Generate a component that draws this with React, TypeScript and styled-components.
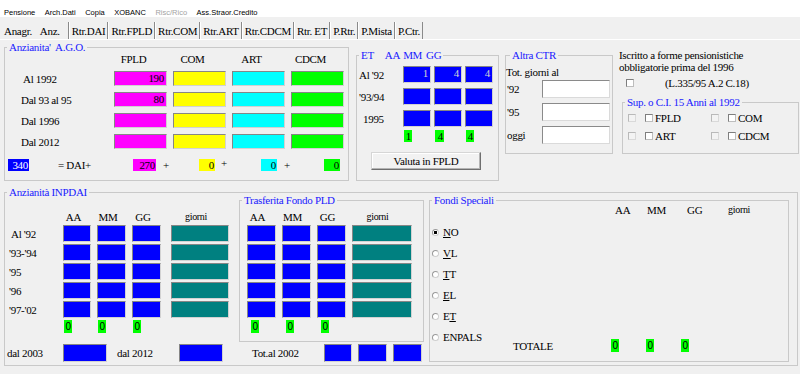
import React from "react";
import styled, { createGlobalStyle } from "styled-components";

const GlobalStyle = createGlobalStyle`
  html, body { margin: 0; padding: 0; background: #f0f0f0; }
  #root { width: 800px; height: 374px; overflow: hidden; }
  *, *::before, *::after { box-sizing: border-box; }
`;

const SERIF = `"Liberation Serif", "Times New Roman", serif`;
const SANS = `"Liberation Sans", Arial, sans-serif`;

const C = {
  face: "#f0f0f0",
  frame: "#c9c9c9",
  caption: "#1a1aff",
  blue: "#0000ff",
  magenta: "#ff00ff",
  yellow: "#ffff00",
  cyan: "#00ffff",
  green: "#00ff00",
  teal: "#008080",
};

const Window = styled.div`
  width: 800px;
  height: 374px;
  background: ${C.face};
  display: flex;
  flex-direction: column;
  font-family: ${SERIF};
  font-size: 11px;
  line-height: 12px;
  letter-spacing: -0.3px;
  color: #000;
`;

/* ---------- menu + tabs ---------- */
const MenuBar = styled.nav`
  height: 17px;
  flex: none;
  background: #fff;
  display: flex;
  align-items: center;
  gap: 9.5px;
  padding: 8px 0 0 4px;
  font-family: ${SANS};
  font-size: 7.5px;
  line-height: 9px;
  letter-spacing: 0;
`;
const MenuItem = styled.span<{ $disabled?: boolean }>`
  color: ${(p) => (p.$disabled ? "#a3a3a3" : "#000")};
  white-space: nowrap;
`;

const TabStrip = styled.div`
  height: 23px;
  flex: none;
  display: flex;
  align-items: flex-end;
  border-bottom: 1px solid #fff;
`;
type TabKind = "plain" | "active" | "normal";
const Tab = styled.div<{ $kind: TabKind }>`
  height: 17px;
  display: flex;
  align-items: center;
  white-space: nowrap;
  padding: ${(p) =>
    p.$kind === "plain" ? "0 3px 0 3px" : p.$kind === "active" ? "0 8px 0 3px" : "0 2px 0 2px"};
  border-left: 1px solid ${(p) => (p.$kind === "normal" ? "#ffffff" : "transparent")};
  border-right: 1px solid ${(p) => (p.$kind === "plain" ? "transparent" : "#8a8a8a")};
`;

/* ---------- generic parts ---------- */
const Panel = styled.main`
  flex: 1;
  display: flex;
  flex-direction: column;
`;
const TopRow = styled.div`
  height: 152px;
  flex: none;
  display: flex;
  align-items: flex-start;
  padding-left: 4px;
`;
const GroupBox = styled.section`
  position: relative;
  flex: none;
  border: 1px solid ${C.frame};
`;
const Caption = styled.span<{ $left?: number }>`
  position: absolute;
  top: -7px;
  left: ${(p) => p.$left ?? 2}px;
  padding: 0 2px;
  display: flex;
  background: ${C.face};
  color: ${C.caption};
  white-space: nowrap;
  line-height: 12px;
`;
const CapPart = styled.span<{ $ml: number }>`
  margin-left: ${(p) => p.$ml}px;
`;
const ColHead = styled.span<{ $pr?: number; $small?: boolean }>`
  text-align: center;
  padding-right: ${(p) => p.$pr ?? 8}px;
  white-space: nowrap;
  font-size: ${(p) => (p.$small ? "10px" : "11px")};
  align-self: center;
`;
const RowLabel = styled.span<{ $indent?: number }>`
  padding-left: ${(p) => p.$indent ?? 0}px;
  white-space: nowrap;
  align-self: center;
`;
const Field = styled.div<{ $bg: string; $fg?: string }>`
  background: ${(p) => p.$bg};
  color: ${(p) => p.$fg ?? "#000"};
  border: 1px solid;
  border-color: #868686 #d2d2d2 #d2d2d2 #868686;
  text-align: right;
  padding-right: 2px;
  line-height: 13px;
  overflow: hidden;
`;
const Chip = styled.span<{ $bg: string; $fg?: string; $w: number }>`
  display: block;
  width: ${(p) => p.$w}px;
  height: 12px;
  background: ${(p) => p.$bg};
  color: ${(p) => p.$fg ?? "#000"};
  text-align: right;
  padding-right: 1px;
  line-height: 12px;
`;
const SansChip = styled(Chip)`
  font-family: ${SANS};
  font-size: 10px;
  letter-spacing: 0;
  height: 13px;
  line-height: 13px;
  justify-self: start;
`;
const Plus = styled.span<{ $raised?: boolean }>`
  margin-top: ${(p) => (p.$raised ? "-5px" : "0")};
  padding-left: 1px;
`;
const CheckBox = styled.span<{ $disabled?: boolean }>`
  display: inline-block;
  flex: none;
  width: 8px;
  height: 8px;
  border: 1px solid;
  border-color: ${(p) =>
    p.$disabled ? "#b9b9b9 #d9d9d9 #d9d9d9 #b9b9b9" : "#7e7e7e #bdbdbd #bdbdbd #7e7e7e"};
  background: ${(p) => (p.$disabled ? "#f3f3f3" : "#fff")};
`;

/* ---------- A.G.O. ---------- */
const AgoGroup = styled(GroupBox)`
  width: 345px;
  height: 134px;
  margin-top: 7px;
  padding: 5px 0 0 3px;
`;
const AgoGrid = styled.div`
  display: grid;
  grid-template-columns: 100px repeat(4, 53px);
  grid-template-rows: 12px repeat(4, 15px) 16px;
  column-gap: 6px;
  row-gap: 6px;
`;
const AgoTotals = styled.div`
  grid-column: 1 / -1;
  align-self: end;
  height: 12px;
  display: grid;
  grid-template-columns: 50px 75px 29px 37px 21px 41px 22px 41px 16px;
  align-items: center;
`;

/* ---------- ET ---------- */
const EtGroup = styled(GroupBox)`
  width: 143px;
  height: 126px;
  margin: 15px 0 0 7px;
  padding: 10px 0 0 2px;
`;
const EtGrid = styled.div`
  display: grid;
  grid-template-columns: 41px repeat(3, 28px);
  grid-template-rows: repeat(3, 17px) 12px auto;
  column-gap: 3px;
  row-gap: 5px;
`;
const EtChip = styled(Chip)`
  margin-top: -2px;
  justify-self: start;
  margin-left: 1px;
`;
const Button = styled.button`
  grid-column: 1 / -1;
  justify-self: center;
  margin-top: 3px;
  width: 110px;
  height: 18px;
  padding: 0;
  font-family: ${SERIF};
  font-size: 11px;
  letter-spacing: -0.3px;
  color: #000;
  background: #f2f2f2;
  border: 1px solid;
  border-color: #d6d6d6 #6f6f6f #6f6f6f #d6d6d6;
  box-shadow: inset -1px -1px 0 #b4b4b4, inset 1px 1px 0 #fff;
`;

/* ---------- Altra CTR ---------- */
const CtrGroup = styled(GroupBox)`
  width: 108px;
  height: 99px;
  margin: 15px 0 0 6px;
  padding-top: 10px;
`;
const CtrTitle = styled.div`
  height: 12px;
  white-space: nowrap;
`;
const CtrGrid = styled.div`
  margin-top: 2px;
  display: grid;
  grid-template-columns: 36px 68px;
  grid-auto-rows: 18px;
  row-gap: 5px;
`;
const WhiteInput = styled.div`
  background: #fff;
  border: 1px solid;
  border-color: #8a8a8a #dadada #dadada #8a8a8a;
`;

/* ---------- info column ---------- */
const InfoColumn = styled.div`
  width: 180px;
  margin: 9px 0 0 6px;
  display: flex;
  flex-direction: column;
`;
const InfoText = styled.p`
  margin: 0;
  line-height: 12px;
  white-space: nowrap;
`;
const LawRow = styled.div`
  margin-top: 4px;
  height: 12px;
  display: flex;
  align-items: center;
  padding-left: 7px;
  gap: 31px;
`;
const SupGroup = styled(GroupBox)`
  width: 177px;
  height: 52px;
  margin: 13px 0 0 3px;
  padding: 9px 0 0 5px;
`;
const SupGrid = styled.div`
  display: grid;
  grid-template-columns: 83px auto;
  grid-auto-rows: 12px;
  row-gap: 6px;
`;
const SupItem = styled.div`
  display: flex;
  align-items: center;
  white-space: nowrap;
  & > :nth-child(2) {
    margin-left: 9px;
  }
  & > span:last-child {
    margin-left: 2px;
  }
`;

/* ---------- INPDAI ---------- */
const InpdaiGroup = styled(GroupBox)`
  width: 794px;
  height: 174px;
  margin-left: 4px;
  padding-top: 7px;
  display: flex;
  align-items: flex-start;
`;
const LeftBlock = styled.div`
  width: 419px;
  display: flex;
  flex-direction: column;
`;
const LeftTop = styled.div`
  display: flex;
  align-items: flex-start;
`;
const InpdaiGrid = styled.div`
  width: 234px;
  padding-top: 11px;
  display: grid;
  grid-template-columns: 52px 28px 29px 29px 62px;
  grid-template-rows: 12px repeat(5, 17px) 13px;
  column-gap: 6px;
  row-gap: 2px;
`;
const GiorniField = styled(Field)`
  width: 58px;
  justify-self: end;
`;
const InChip = styled(SansChip)`
  margin-left: 1px;
`;
const TrasfGroup = styled(GroupBox)`
  width: 185px;
  height: 142px;
  padding: 10px 0 0 7px;
`;
const TrasfGrid = styled.div`
  display: grid;
  grid-template-columns: 29px 29px 29px 60px;
  grid-template-rows: 12px repeat(5, 17px) 13px;
  column-gap: 6px;
  row-gap: 2px;
`;
const TrChip = styled(SansChip)`
  margin-left: 4px;
`;
const BottomRow = styled.div`
  margin-top: 2px;
  height: 18px;
  display: flex;
  align-items: center;
`;
const BottomLabel = styled.span<{ $w: number; $pl: number }>`
  width: ${(p) => p.$w}px;
  padding-left: ${(p) => p.$pl}px;
  white-space: nowrap;
`;
const WideBlue = styled(Field)`
  width: 44px;
  height: 18px;
`;
const TotBoxes = styled.div`
  display: flex;
  gap: 6px;
`;
const TotBlue = styled(Field)<{ $w: number }>`
  width: ${(p) => p.$w}px;
  height: 18px;
`;

/* ---------- Fondi Speciali ---------- */
const FondiGroup = styled(GroupBox)`
  width: 360px;
  height: 162px;
  margin-left: 5px;
  padding: 3px 0 0 2px;
`;
const FondiHead = styled.div`
  margin-left: 183px;
  height: 12px;
  display: grid;
  grid-template-columns: 32px 40px 41px auto;
  align-items: center;
`;
const FondiHeadCell = styled.span<{ $small?: boolean }>`
  font-size: ${(p) => (p.$small ? "10px" : "11px")};
  white-space: nowrap;
`;
const RadioList = styled.div`
  margin-top: 10px;
  display: flex;
  flex-direction: column;
  gap: 9px;
`;
const RadioRow = styled.label<{ $w?: number }>`
  display: flex;
  align-items: center;
  gap: 4px;
  height: 12px;
  width: ${(p) => (p.$w ? `${p.$w}px` : "auto")};
  flex: none;
  white-space: nowrap;
`;
const RadioDot = styled.span<{ $on?: boolean }>`
  width: 7px;
  height: 7px;
  flex: none;
  border-radius: 50%;
  border: 1px solid;
  border-color: #9a9a9a #cfcfcf #cfcfcf #9a9a9a;
  background: ${(p) =>
    p.$on ? "radial-gradient(circle, #000 0 1.4px, #fff 1.8px)" : "#fff"};
`;
const FondiLastRow = styled.div`
  display: flex;
  align-items: flex-start;
`;
const TotaleBlock = styled.div`
  margin-top: 8px;
  height: 13px;
  display: flex;
  align-items: center;
`;
const TotaleLabel = styled.span`
  width: 98px;
`;
const FondiChips = styled.div`
  display: flex;
  gap: 27px;
`;

/* ---------- data ---------- */
const menu = ["Pensione", "Arch.Dati", "Copia", "XOBANC", "Risc/Rico", "Ass.Straor.Credito"];
const tabs = ["Rtr.DAI", "Rtr.FPLD", "Rtr.COM", "Rtr.ART", "Rtr.CDCM", "Rtr. ET", "P.Rtr.", "P.Mista", "P.Ctr."];
const agoRows = [
  { label: "Al 1992", indent: 15, fpld: "190" },
  { label: "Dal 93 al 95", indent: 13, fpld: "80" },
  { label: "Dal 1996", indent: 13, fpld: "" },
  { label: "Dal 2012", indent: 13, fpld: "" },
];
const etRows = [
  { label: "Al '92", indent: 0, vals: ["1", "4", "4"] },
  { label: "'93/94", indent: 0, vals: ["", "", ""] },
  { label: "1995", indent: 4, vals: ["", "", ""] },
];
const inpdaiRows = [
  { label: "Al  '92", indent: 6 },
  { label: "'93-'94", indent: 4 },
  { label: "'95", indent: 4 },
  { label: "'96", indent: 4 },
  { label: "'97-'02", indent: 4 },
];
const radios: { pre: string; u: string; post: string; on?: boolean }[] = [
  { pre: "", u: "N", post: "O", on: true },
  { pre: "", u: "V", post: "L" },
  { pre: "", u: "T", post: "T" },
  { pre: "", u: "E", post: "L" },
  { pre: "E", u: "T", post: "" },
];

export default function App() {
  return (
    <>
      <GlobalStyle />
      <Window>
        <MenuBar>
          {menu.map((m) => (
            <MenuItem key={m} $disabled={m === "Risc/Rico"}>
              {m}
            </MenuItem>
          ))}
        </MenuBar>

        <TabStrip>
          <Tab $kind="plain">Anagr.</Tab>
          <Tab $kind="active">Anz.</Tab>
          {tabs.map((t) => (
            <Tab key={t} $kind="normal">
              {t}
            </Tab>
          ))}
        </TabStrip>

        <Panel>
          <TopRow>
            <AgoGroup>
              <Caption>Anzianita'&nbsp; A.G.O.</Caption>
              <AgoGrid>
                <span />
                {["FPLD", "COM", "ART", "CDCM"].map((h) => (
                  <ColHead key={h} $pr={14}>
                    {h}
                  </ColHead>
                ))}
                {agoRows.map((r) => (
                  <React.Fragment key={r.label}>
                    <RowLabel $indent={r.indent}>{r.label}</RowLabel>
                    <Field $bg={C.magenta}>{r.fpld}</Field>
                    <Field $bg={C.yellow} />
                    <Field $bg={C.cyan} />
                    <Field $bg={C.green} />
                  </React.Fragment>
                ))}
                <AgoTotals>
                  <Chip $bg={C.blue} $fg="#fff" $w={21}>340</Chip>
                  <span>= DAI+</span>
                  <Chip $bg={C.magenta} $w={23}>270</Chip>
                  <Plus>+</Plus>
                  <Chip $bg={C.yellow} $w={16}>0</Chip>
                  <Plus $raised>+</Plus>
                  <Chip $bg={C.cyan} $w={16}>0</Chip>
                  <Plus>+</Plus>
                  <Chip $bg={C.green} $w={16}>0</Chip>
                </AgoTotals>
              </AgoGrid>
            </AgoGroup>

            <EtGroup>
              <Caption $left={2}>
                <span>ET</span>
                <CapPart $ml={11}>AA</CapPart>
                <CapPart $ml={3}>MM</CapPart>
                <CapPart $ml={4}>GG</CapPart>
              </Caption>
              <EtGrid>
                {etRows.map((r) => (
                  <React.Fragment key={r.label}>
                    <RowLabel $indent={r.indent}>{r.label}</RowLabel>
                    {r.vals.map((v, i) => (
                      <Field key={i} $bg={C.blue} $fg="#d4d4d4">
                        {v}
                      </Field>
                    ))}
                  </React.Fragment>
                ))}
                <span />
                <EtChip $bg={C.green} $w={8}>1</EtChip>
                <EtChip $bg={C.green} $w={9}>4</EtChip>
                <EtChip $bg={C.green} $w={8}>4</EtChip>
                <Button type="button">Valuta in FPLD</Button>
              </EtGrid>
            </EtGroup>

            <CtrGroup>
              <Caption $left={4}>Altra CTR</Caption>
              <CtrTitle>Tot. giorni al</CtrTitle>
              <CtrGrid>
                <RowLabel $indent={1}>'92</RowLabel>
                <WhiteInput />
                <RowLabel $indent={1}>'95</RowLabel>
                <WhiteInput />
                <RowLabel $indent={1}>oggi</RowLabel>
                <WhiteInput />
              </CtrGrid>
            </CtrGroup>

            <InfoColumn>
              <InfoText>Iscritto a forme pensionistiche</InfoText>
              <InfoText>obbligatorie prima del 1996</InfoText>
              <LawRow>
                <CheckBox />
                <span>(L.335/95 A.2 C.18)</span>
              </LawRow>
              <SupGroup>
                <Caption>Sup. o C.I. 15 Anni al 1992</Caption>
                <SupGrid>
                  {["FPLD", "COM", "ART", "CDCM"].map((s) => (
                    <SupItem key={s}>
                      <CheckBox $disabled />
                      <CheckBox />
                      <span>{s}</span>
                    </SupItem>
                  ))}
                </SupGrid>
              </SupGroup>
            </InfoColumn>
          </TopRow>

          <InpdaiGroup>
            <Caption>Anzianità INPDAI</Caption>
            <LeftBlock>
              <LeftTop>
                <InpdaiGrid>
                  <span />
                  <ColHead $pr={7}>AA</ColHead>
                  <ColHead $pr={7}>MM</ColHead>
                  <ColHead $pr={7}>GG</ColHead>
                  <ColHead $pr={4} $small>giorni</ColHead>
                  {inpdaiRows.map((r) => (
                    <React.Fragment key={r.label}>
                      <RowLabel $indent={r.indent}>{r.label}</RowLabel>
                      <Field $bg={C.blue} />
                      <Field $bg={C.blue} />
                      <Field $bg={C.blue} />
                      <GiorniField $bg={C.teal} />
                    </React.Fragment>
                  ))}
                  <span />
                  <InChip $bg={C.green} $w={8}>0</InChip>
                  <InChip $bg={C.green} $w={8}>0</InChip>
                  <InChip $bg={C.green} $w={8}>0</InChip>
                </InpdaiGrid>

                <TrasfGroup>
                  <Caption>Trasferita Fondo PLD</Caption>
                  <TrasfGrid>
                    <ColHead $pr={8}>AA</ColHead>
                    <ColHead $pr={8}>MM</ColHead>
                    <ColHead $pr={8}>GG</ColHead>
                    <ColHead $pr={9} $small>giorni</ColHead>
                    {[0, 1, 2, 3, 4].map((i) => (
                      <React.Fragment key={i}>
                        <Field $bg={C.blue} />
                        <Field $bg={C.blue} />
                        <Field $bg={C.blue} />
                        <Field $bg={C.teal} />
                      </React.Fragment>
                    ))}
                    <TrChip $bg={C.green} $w={8}>0</TrChip>
                    <TrChip $bg={C.green} $w={8}>0</TrChip>
                    <TrChip $bg={C.green} $w={8}>0</TrChip>
                  </TrasfGrid>
                </TrasfGroup>
              </LeftTop>

              <BottomRow>
                <BottomLabel $w={58} $pl={2}>dal 2003</BottomLabel>
                <WideBlue $bg={C.blue} />
                <BottomLabel $w={72} $pl={10}>dal 2012</BottomLabel>
                <WideBlue $bg={C.blue} />
                <BottomLabel $w={101} $pl={29}>Tot.al 2002</BottomLabel>
                <TotBoxes>
                  <TotBlue $bg={C.blue} $w={28} />
                  <TotBlue $bg={C.blue} $w={29} />
                  <TotBlue $bg={C.blue} $w={29} />
                </TotBoxes>
              </BottomRow>
            </LeftBlock>

            <FondiGroup>
              <Caption>Fondi Speciali</Caption>
              <FondiHead>
                <FondiHeadCell>AA</FondiHeadCell>
                <FondiHeadCell>MM</FondiHeadCell>
                <FondiHeadCell>GG</FondiHeadCell>
                <FondiHeadCell $small>giorni</FondiHeadCell>
              </FondiHead>
              <RadioList>
                {radios.map((r) => (
                  <RadioRow key={r.pre + r.u + r.post}>
                    <RadioDot $on={r.on} />
                    <span>
                      {r.pre}
                      <u>{r.u}</u>
                      {r.post}
                    </span>
                  </RadioRow>
                ))}
                <FondiLastRow>
                  <RadioRow $w={81}>
                    <RadioDot />
                    <span>ENPALS</span>
                  </RadioRow>
                  <TotaleBlock>
                    <TotaleLabel>TOTALE</TotaleLabel>
                    <FondiChips>
                      <SansChip $bg={C.green} $w={8}>0</SansChip>
                      <SansChip $bg={C.green} $w={8}>0</SansChip>
                      <SansChip $bg={C.green} $w={8}>0</SansChip>
                    </FondiChips>
                  </TotaleBlock>
                </FondiLastRow>
              </RadioList>
            </FondiGroup>
          </InpdaiGroup>
        </Panel>
      </Window>
    </>
  );
}
